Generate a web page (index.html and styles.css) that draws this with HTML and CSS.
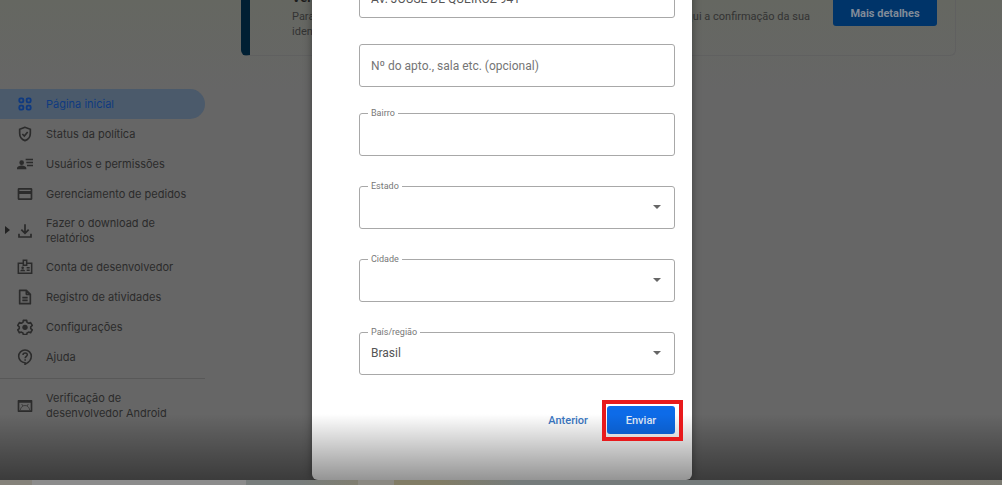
FILE: index.html
```html
<!DOCTYPE html>
<html lang="pt-BR">
<head>
  <meta charset="UTF-8">
  <meta name="viewport" content="width=device-width, initial-scale=1">
  <title>Verificação de identidade</title>
  <link rel="stylesheet" href="styles.css">
</head>
<body>
  <div class="screen">
    <aside class="sidebar">
      <nav>
        <ul class="menu">
          <li><a class="active" href="#">
            <svg class="icon" viewBox="0 0 24 24"><g fill="none" stroke="currentColor" stroke-width="2.8"><rect x="3.5" y="3.5" width="6" height="6" rx="2"/><rect x="14.5" y="3.5" width="6" height="6" rx="2"/><rect x="3.5" y="14.5" width="6" height="6" rx="2"/><rect x="14.5" y="14.5" width="6" height="6" rx="2"/></g></svg>
            <span>Página inicial</span></a></li>
          <li><a href="#">
            <svg class="icon" viewBox="0 0 24 24"><path d="M12 2L4 5v6c0 5 3.400 9.500 8 11 4.600-1.500 8-6 8-11V5z M8 12l3 3 5-6" fill="none" stroke="currentColor" stroke-width="2.500"/></svg>
            <span>Status da política</span></a></li>
          <li><a href="#">
            <svg class="icon" viewBox="0 0 24 24"><circle cx="7" cy="10" r="3.500"/><path d="M0 20v-2c0-2.500 4-3.800 7-3.800s7 1.300 7 3.800v2z M13 4h11v2.200H13z M14 8.500h10v2.200H14z M15 13h9v2.200h-9z"/></svg>
            <span>Usuários e permissões</span></a></li>
          <li><a href="#">
            <svg class="icon" viewBox="0 0 24 24"><path fill-rule="evenodd" d="M3 3h18a2 2 0 0 1 2 2v14a2 2 0 0 1-2 2H3a2 2 0 0 1-2-2V5a2 2 0 0 1 2-2z M3.500 5.500v2h17v-2z M3.500 12v6.500h17V12z"/></svg>
            <span>Gerenciamento de pedidos</span></a></li>
          <li><a class="expandable two-lines" href="#">
            <svg class="icon" viewBox="0 0 24 24"><path d="M12 2v13 M6.500 10l5.500 5.500L17.500 10 M3 16v5h18v-5" fill="none" stroke="currentColor" stroke-width="2.600"/></svg>
            <span>Fazer o download de relatórios</span></a></li>
          <li><a href="#">
            <svg class="icon" viewBox="0 0 24 24"><path d="M9.500 6.500H2v15h20v-15h-7.500 M9.500 2h5v7.500h-5z M14.500 13h4.500 M14.500 17h4.500" fill="none" stroke="currentColor" stroke-width="2.300"/><circle cx="8.500" cy="13" r="1.900"/><path d="M4.800 18.500c0-3.500 7.400-3.500 7.400 0z"/></svg>
            <span>Conta de desenvolvedor</span></a></li>
          <li><a href="#">
            <svg class="icon" viewBox="0 0 24 24"><path d="M4 2h10l6 6v14H4z M14 2v6h6 M8 13h8 M8 17h8" fill="none" stroke="currentColor" stroke-width="2.500" stroke-linejoin="round"/></svg>
            <span>Registro de atividades</span></a></li>
          <li><a href="#">
            <svg class="icon" viewBox="0 0 24 24"><path d="M9.500 2h5l.6 3 2.400 1.400 2.900-1 2.500 4.300-2.300 2v2.600l2.300 2-2.500 4.300-2.900-1-2.400 1.400-.6 2.500h-5L8.900 21l-2.400-1.400-2.900 1-2.500-4.300 2.300-2v-2.600l-2.300-2 2.500-4.300 2.900 1L8.900 5z" fill="none" stroke="currentColor" stroke-width="2.400" stroke-linejoin="round"/><circle cx="12" cy="12.500" r="4"/></svg>
            <span>Configurações</span></a></li>
          <li><a href="#">
            <svg class="icon" viewBox="0 0 24 24"><path d="M12 24v-3.500A9.500 9.500 0 1 1 21.500 11c0 5-4 9.500-9.500 12z M9 9c0-4.200 6.500-4 6.500-.3 0 2.400-3.300 2.500-3.300 5.300 M12.200 15.500v2.300" fill="none" stroke="currentColor" stroke-width="2.300"/></svg>
            <span>Ajuda</span></a></li>
        </ul>
        <ul class="menu menu-extra">
          <li><a class="two-lines" href="#">
            <svg class="icon" viewBox="0 0 24 24"><path fill-rule="evenodd" d="M2 3h20a1 1 0 0 1 1 1v16a1 1 0 0 1-1 1H2a1 1 0 0 1-1-1V4a1 1 0 0 1 1-1z M3.500 7v11.500h17V7z"/><path d="M5 18c1-9 13-9 14 0M7 9l2 3M17 9l-2 3" fill="none" stroke="currentColor" stroke-width="1"/></svg>
            <span>Verificação de desenvolvedor Android</span></a></li>
        </ul>
      </nav>
    </aside>

    <main class="content">
      <section class="notice">
        <div class="notice-text">
          <h2>Verifique sua identidade</h2>
          <p><span>Para continuar, envie seus documentos</span><span>e siga aqui a confirmação da sua</span></p>
          <p>identidade</p>
        </div>
        <button type="button" class="btn-details">Mais detalhes</button>
      </section>
    </main>

    <div class="overlay">
      <form class="modal">
        <div class="field plain">
          <input type="text" class="filled" aria-label="Endereço" value="AV. JOUSE DE QUEIROZ 941">
        </div>
        <div class="field plain">
          <input type="text" aria-label="Nº do apto., sala etc." placeholder="Nº do apto., sala etc. (opcional)">
        </div>
        <div class="field">
          <label for="bairro">Bairro</label>
          <input type="text" id="bairro">
        </div>
        <div class="field select">
          <label for="estado">Estado</label>
          <select id="estado"><option></option></select>
        </div>
        <div class="field select">
          <label for="cidade">Cidade</label>
          <select id="cidade"><option></option></select>
        </div>
        <div class="field select">
          <label for="pais">País/região</label>
          <select id="pais"><option>Brasil</option></select>
        </div>
        <div class="actions">
          <button type="button" class="btn-back">Anterior</button>
          <div class="highlight">
            <button type="submit" class="btn-send">Enviar</button>
          </div>
        </div>
      </form>
    </div>
  </div>
  <div class="strip"></div>
</body>
</html>
```
FILE: styles.css
```css
* {
  box-sizing: border-box;
}

body {
  margin: 0;
  height: 100vh;
  display: flex;
  flex-direction: column;
  overflow: hidden;
  font-family: Roboto, "Liberation Sans", sans-serif;
  background-color: #666;
}

.screen {
  position: relative;
  flex: 1;
  min-height: 0;
  display: flex;
  overflow: hidden;
  background: linear-gradient(#656761, #666 90px);
}

/* video player shade at the bottom */
.screen::after {
  content: "";
  position: absolute;
  left: 0;
  right: 0;
  bottom: 0;
  height: 66px;
  background: linear-gradient(rgba(0, 0, 0, 0), rgba(0, 0, 0, 0.42));
  pointer-events: none;
  z-index: 2;
}

.strip {
  height: 5px;
  background: linear-gradient(90deg, #85827a 0 32px, #8c8c8c 32px 246px, #787d7c 246px 300px, #807e70 358px, #8a8881 358px 394px, #817c65 394px 440px, #757b7b 520px, #757b7b 720px, #817d6e 860px, #7b7a72);
}

/* sidebar */
.sidebar {
  width: 205px;
  padding-top: 89px;
  font-family: Inter, "Liberation Sans", sans-serif;
}

.menu {
  list-style: none;
  margin: 0;
  padding: 0;
}

.menu a {
  position: relative;
  display: flex;
  align-items: center;
  gap: 13px;
  height: 30px;
  padding-left: 17px;
  color: #2b2b2b;
  font-size: 11px;
  line-height: 15px;
  text-decoration: none;
}

.menu a.two-lines {
  height: 43px;
  padding-right: 32px;
}

.menu a.active {
  background-color: #4b5a6b;
  color: #0f3a80;
  border-radius: 0 15px 15px 0;
}

.menu a.expandable::before {
  content: "";
  position: absolute;
  left: 5px;
  top: 17px;
  border-left: 5px solid #222;
  border-top: 4px solid transparent;
  border-bottom: 4px solid transparent;
}

.icon {
  width: 16px;
  height: 16px;
  flex: none;
  fill: currentColor;
}

.menu-extra {
  margin-top: 6px;
  padding-top: 5px;
  border-top: 1px solid #585858;
}

/* notice */
.content {
  flex: 1;
  padding: 0 46px 0 36px;
}

.notice {
  display: flex;
  justify-content: space-between;
  align-items: flex-start;
  height: 56px;
  padding: 0 18px 0 42px;
  border: 1px solid #606060;
  border-top: 0;
  border-left: 9px solid #001f33;
  border-radius: 0 0 6px 6px;
  color: #333;
}

.notice-text {
  flex: 1;
  margin-top: -9px;
}

.notice h2 {
  margin: 0 0 4px;
  font-size: 13px;
  line-height: 14px;
  color: #1c1c1c;
}

.notice p {
  display: flex;
  justify-content: space-between;
  margin: 0;
  padding-right: 23px;
  font-size: 11px;
  line-height: 15px;
}

.btn-details {
  width: 104px;
  height: 26px;
  border: 0;
  border-radius: 0 0 3px 3px;
  background-color: #003469;
  color: #808b98;
  font-family: inherit;
  font-size: 11px;
  font-weight: 700;
}

/* address form */
.overlay {
  position: absolute;
  inset: 0;
  display: flex;
  justify-content: center;
  align-items: flex-end;
  padding-left: 2px;
}

.modal {
  width: 380px;
  padding: 24px 17px 46px 47px;
  border-radius: 6px;
  background-color: #fff;
  box-shadow: 0 0 8px rgba(0, 0, 0, 0.4);
}

.field {
  position: relative;
  width: 316px;
  margin-bottom: 30px;
}

.field.plain {
  margin-bottom: 26px;
}

.field input,
.field select {
  display: block;
  width: 100%;
  height: 43px;
  padding: 0 11px;
  border: 1px solid #a8a8a8;
  border-radius: 3px;
  background-color: #fff;
  color: #555;
  font-family: inherit;
  font-size: 12px;
  appearance: none;
}

.field input.filled {
  padding-top: 4px;
}

.field select {
  padding-bottom: 2px;
}

.field input::placeholder {
  color: #757575;
  opacity: 1;
}

.field label {
  position: absolute;
  left: 9px;
  top: -6px;
  padding: 0 3px;
  background-color: #fff;
  color: #777;
  font-size: 9px;
  line-height: 12px;
}

.field.select::after {
  content: "";
  position: absolute;
  right: 14px;
  top: 19px;
  border-top: 4px solid #666;
  border-left: 4px solid transparent;
  border-right: 4px solid transparent;
  pointer-events: none;
}

.actions {
  display: flex;
  justify-content: flex-end;
  align-items: center;
  gap: 8px;
  width: 316px;
  margin-top: 31px;
}

.actions button {
  height: 28px;
  border: 0;
  border-radius: 3px;
  font-family: inherit;
  font-size: 11px;
  font-weight: 500;
}

.btn-back {
  padding: 0 11px;
  background: none;
  color: #3b78c4;
}

.highlight {
  position: relative;
}

.highlight::after {
  content: "";
  position: absolute;
  inset: -6px -8px -7px -5px;
  border: 4px solid #e81a1c;
  pointer-events: none;
  z-index: 3;
}

.btn-send {
  display: block;
  width: 68px;
  background-color: #0d6be8;
  color: #e3eefc;
}
```
